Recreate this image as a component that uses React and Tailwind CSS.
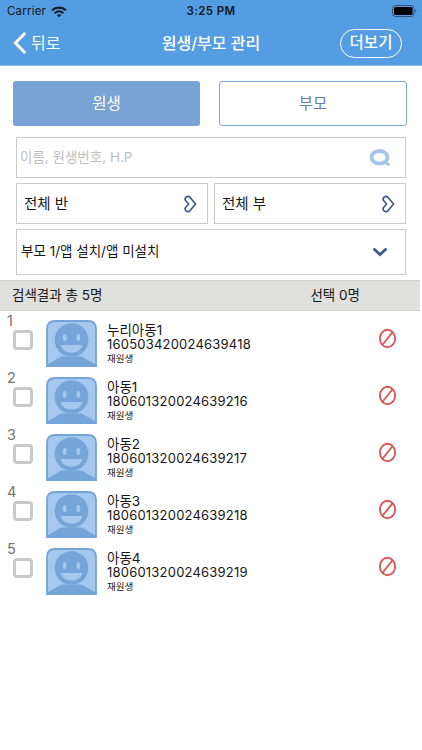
const students = [
  { name: "누리아동1", code: "160503420024639418", status: "재원생" },
  { name: "아동1", code: "180601320024639216", status: "재원생" },
  { name: "아동2", code: "180601320024639217", status: "재원생" },
  { name: "아동3", code: "180601320024639218", status: "재원생" },
  { name: "아동4", code: "180601320024639219", status: "재원생" },
];

function StatusBar() {
  return (
    <div className="grid h-[23px] grid-cols-3 items-center pr-[5px] pl-[7px] text-[11.5px] leading-none text-[#101820]">
      <div className="flex items-center gap-[5px]">
        <span className="tracking-[0.2px]">Carrier</span>
        <svg width="16" height="12" viewBox="0 0 16 12" fill="none" stroke="currentColor">
          <path d="M1 4.3C5 .6 11 .6 15 4.3" strokeWidth="2.2" />
          <path d="M3.6 7.2c2.7-2.3 6.1-2.3 8.8 0" strokeWidth="2" />
          <path d="M8 11.3 5.7 9c1.4-1.1 3.2-1.1 4.6 0Z" fill="currentColor" stroke="none" />
        </svg>
      </div>
      <span className="pr-[2px] text-center font-semibold tracking-[0.35px]">3:25 PM</span>
      <svg className="mb-[2px] justify-self-end" width="25" height="12" viewBox="0 0 25 12">
        <rect x=".5" y=".5" width="21.5" height="11" rx="3" fill="none" stroke="#2c5279" />
        <rect x="2" y="2" width="18.5" height="8" rx="1.5" fill="#000" />
        <path d="M23.3 4.2c1.3.7 1.3 2.9 0 3.6Z" fill="#2c5279" />
      </svg>
    </div>
  );
}

function Header() {
  return (
    <header className="h-[66px] border-b border-[#8fbcec] bg-[#559de3]">
      <StatusBar />
      <div className="grid h-[40px] grid-cols-[1fr_auto_1fr] items-center pr-[20px] pl-[13px] text-[16px] text-white">
        <button className="flex items-center gap-[4px] text-left">
          <svg width="14" height="22" viewBox="0 0 14 22" fill="none" stroke="currentColor" strokeWidth="3">
            <path d="M12.2 1 2.4 11l9.8 10" />
          </svg>
          <span>뒤로</span>
        </button>
        <h1 className="pl-[7px] font-medium">원생/부모 관리</h1>
        <button className="flex h-[29px] w-[62px] items-center justify-center justify-self-end rounded-full border border-white text-[15.5px] font-medium">
          더보기
        </button>
      </div>
    </header>
  );
}

function DoubleArrow() {
  return (
    <svg width="13" height="18" viewBox="0 0 13 18" fill="none" stroke="#40598c" strokeWidth="1.7" strokeLinejoin="round">
      <path d="M1.800 5.800C-.300 3.200 3.300-.2 5.900 2.200L11.600 9l-5.700 6.800c-2.600 2.400-6.200-1-4.100-3.600L4.600 9Z" />
    </svg>
  );
}

function SelectBox({ label }) {
  return (
    <button className="flex h-[41px] flex-1 items-center justify-between border border-[#cbcbcb] pr-[10px] pl-[7px] text-[14.5px]">
      <span>{label}</span>
      <DoubleArrow />
    </button>
  );
}

function Avatar() {
  return (
    <svg className="shrink-0" width="51" height="47" viewBox="0 0 51 47">
      <path d="M1 46V9q0-8 8-8h33q8 0 8 8v37Z" fill="#a5c8ef" stroke="#76a4d8" strokeWidth="1.8" />
      <path d="M1.500 46v-1.500C7 41 11 39 15.500 36.500h20C40 39 44 41 49.500 44.500V46Z" fill="#76a4d8" />
      <circle cx="25.500" cy="20" r="16.800" fill="#76a4d8" />
      <ellipse cx="18.700" cy="17.500" rx="1.900" ry="3.600" fill="#a5c8ef" />
      <ellipse cx="32.300" cy="17.500" rx="1.900" ry="3.600" fill="#a5c8ef" />
      <path d="M14.500 25h22c-1.200 5-5.600 7.500-11 7.500s-9.800-2.500-11-7.500Z" fill="#a5c8ef" />
    </svg>
  );
}

function StudentRow({ student, index }) {
  return (
    <li className="flex h-[57px] items-start">
      <div className="w-[46px] pl-[7px]">
        <span className="block h-[19px] text-[14.5px] leading-[19px] text-[#747474]">{index + 1}</span>
        <span className="ml-[6px] block h-[20px] w-[20px] rounded-[4px] border-[3px] border-[#c9c9c9]" />
      </div>
      <div className="pt-[9px]">
        <Avatar />
      </div>
      <div className="flex-1 pt-[10px] pl-[10px]">
        <p className="h-[16px] text-[13.5px] leading-[19px]">{student.name}</p>
        <p className="h-[15px] text-[13px] leading-[14px] tracking-[0.21px]">{student.code}</p>
        <p className="text-[9.5px] leading-[14px]">{student.status}</p>
      </div>
      <svg className="mt-[17px] mr-[25px]" width="19" height="21" viewBox="0 0 19 21" fill="none" stroke="#dc5558" strokeWidth="1.9">
        <ellipse cx="9.500" cy="10.500" rx="7.600" ry="8.700" />
        <path d="M4.300 17 14.700 4" />
      </svg>
    </li>
  );
}

export default function App() {
  return (
    <div className="h-[750px] w-[422px] overflow-hidden bg-white font-['Inter','Noto_Sans_CJK_KR',sans-serif] text-[#161616]">
      <Header />

      <div className="flex gap-[19px] pt-[15px] pr-[15px] pl-[13px] text-[15.5px]">
        <button className="h-[45px] w-[187px] rounded-[3px] bg-[#78a3d4] text-white">원생</button>
        <button className="h-[45px] w-[188px] rounded-[3px] border border-[#80a8d5] text-[#667fa9]">부모</button>
      </div>

      <div className="flex flex-col gap-[5px] px-[16px] pt-[11px]">
        <div className="flex h-[41px] items-center justify-between border border-[#cbcbcb] pr-[14px] pl-[3px] text-[13.5px] text-[#bdbdc1]">
          <span>이름, 원생번호, H.P</span>
          <svg width="23" height="18" viewBox="0 0 23 18" fill="none" stroke="#a5c6eb">
            <ellipse cx="11.500" cy="8.300" rx="8" ry="6.300" strokeWidth="3.800" />
            <path d="m15.500 12 5.800 4" strokeWidth="3" />
          </svg>
        </div>
        <div className="flex gap-[6px]">
          <SelectBox label="전체 반" />
          <SelectBox label="전체 부" />
        </div>
        <button className="flex h-[46px] items-center justify-between border border-[#cbcbcb] pr-[18px] pl-[4px] text-[13.5px]">
          <span className="pb-[2px]">부모 1/앱 설치/앱 미설치</span>
          <svg width="14" height="9" viewBox="0 0 14 9" fill="none" stroke="#40598c" strokeWidth="2.9">
            <path d="m1.500 1.500 5.500 5 5.500-5" strokeLinecap="round" />
          </svg>
        </button>
      </div>

      <div className="mt-[5px] flex h-[31px] w-[420px] items-center justify-between border-y border-[#d2d2d2] bg-[#e0e0df] pr-[60px] pl-[12px] text-[13.5px]">
        <span>검색결과 총 5명</span>
        <span>선택 0명</span>
      </div>

      <ul>
        {students.map((student, index) => (
          <StudentRow key={student.code} student={student} index={index} />
        ))}
      </ul>
    </div>
  );
}
